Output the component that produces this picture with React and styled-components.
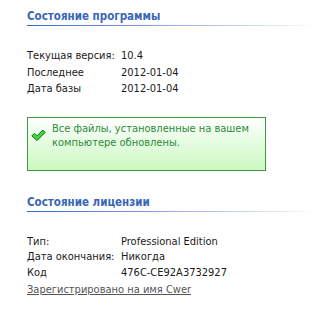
import React from "react";
import styled, { createGlobalStyle } from "styled-components";

const Global = createGlobalStyle`
  html, body { margin: 0; padding: 0; background: #ffffff; }
  body { font-family: Tahoma, "DejaVu Sans Condensed", "DejaVu Sans", sans-serif; font-size: 11px; color: #1a1a1a; }
`;

const Page = styled.div`
  width: 316px;
  height: 312px;
  padding: 9px 0 0 27px;
  box-sizing: border-box;
  display: flex;
  flex-direction: column;
`;

const Section = styled.section`
  display: flex;
  flex-direction: column;
  margin-top: ${(p) => p.$top || 0}px;
`;

const Heading = styled.h2`
  margin: 0;
  font-size: 11.5px;
  font-weight: bold;
  color: #3a66b8;
  line-height: 14px;
  padding-bottom: 2px;
  border-bottom: 1px solid transparent;
  border-image: linear-gradient(to right, #3366cc 0%, #7f9de0 40%, #e8ecf8 90%, #ffffff 100%) 1;
`;

const Table = styled.div`
  display: grid;
  grid-template-columns: 94px 1fr;
  margin-top: ${(p) => p.$top}px;
  line-height: ${(p) => p.$lh}px;
`;

const Cell = styled.div`
  white-space: nowrap;
`;

const Notice = styled.div`
  margin-top: 19px;
  width: 239px;
  height: 54px;
  box-sizing: border-box;
  border: 1px solid #3f9a3f;
  background: linear-gradient(to bottom, #ffffff 0%, #e6fce2 45%, #c9f8c0 100%);
  display: flex;
  align-items: flex-start;
  padding: 4px 6px 0 3px;
  gap: 6px;
  color: #2e8a3a;
  line-height: 14px;
`;

const Check = styled.svg`
  flex: none;
  margin-top: 7px;
`;

const Link = styled.a`
  margin-top: 2px;
  color: #555555;
  text-decoration: underline;
  line-height: 16px;
`;

export default function App() {
  return (
    <>
      <Global />
      <Page>
        <Section>
          <Heading>Состояние программы</Heading>
          <Table $top={22} $lh={16.5}>
            <Cell>Текущая версия:</Cell>
            <Cell>10.4</Cell>
            <Cell>Последнее</Cell>
            <Cell>2012-01-04</Cell>
            <Cell>Дата базы</Cell>
            <Cell>2012-01-04</Cell>
          </Table>
          <Notice>
            <Check width="15" height="13" viewBox="0 0 15 13">
              <path
                d="M0.8 6.8 L3.6 4.4 L6 6.8 L11.8 1 L14.2 3.4 L6 11.6 Z"
                fill="#3fd63f"
                stroke="#1c6e1c"
                strokeWidth="1"
                strokeLinejoin="round"
              />
            </Check>
            <span>Все файлы, установленные на вашем компьютере обновлены.</span>
          </Notice>
        </Section>
        <Section $top={24}>
          <Heading>Состояние лицензии</Heading>
          <Table $top={22} $lh={15.5}>
            <Cell>Тип:</Cell>
            <Cell>Professional Edition</Cell>
            <Cell>Дата окончания:</Cell>
            <Cell>Никогда</Cell>
            <Cell>Код</Cell>
            <Cell>476C-CE92A3732927</Cell>
          </Table>
          <Link href="#">Зарегистрировано на имя Cwer</Link>
        </Section>
      </Page>
    </>
  );
}
